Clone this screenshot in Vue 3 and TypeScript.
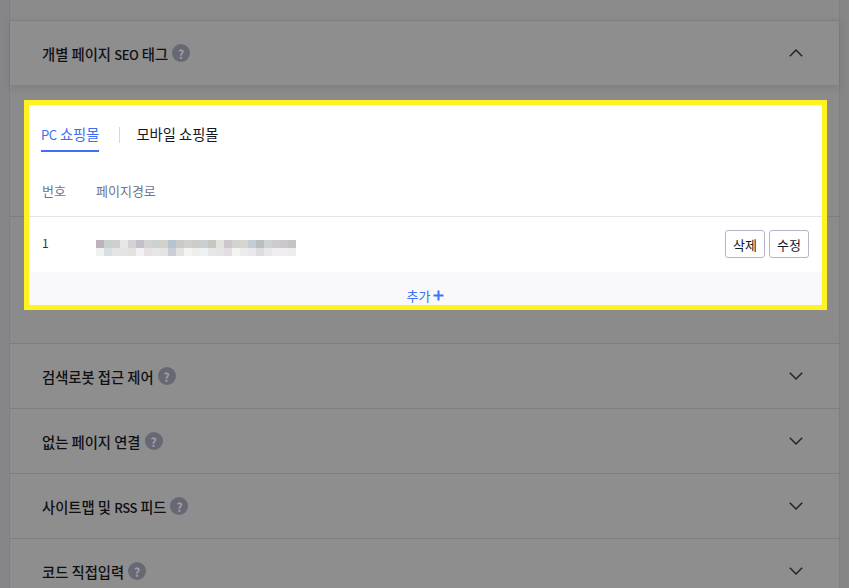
<script setup lang="ts">
const sections = [
  { before: '검색로봇 접근 제어', latin: '', after: '' },
  { before: '없는 페이지 연결', latin: '', after: '' },
  { before: '사이트맵 및 ', latin: 'RSS', after: ' 피드' },
  { before: '코드 직접입력', latin: '', after: '' }
]

// blurred url in the table row
const blurTop = ['#c0b2ba', '#c7d0ce', '#cfcfcf', '#e6e6e8', '#d2d2d2', '#c6bfca', '#d2d2d0', '#ccd2d2', '#d2d2cc', '#b4c5d0', '#cbcbc6', '#d0d0cc', '#cfcbcc', '#cad0d0', '#c9c6c0', '#e2e2e0', '#cdc6d0', '#d2d2ce', '#d6d6cf', '#c4ccd6', '#b9bfbf', '#cdd2d2', '#d0cace', '#c9c6cc', '#c4c4c6']
const blurBottom = ['#f0f0ee', '#d6e0e0', '#e5e5e5', '#e4e4e4', '#e2e2e0', '#f2f2f2', '#e6e2e4', '#e6e6e4', '#e4e4e2', '#c8ced4', '#e2e4e2', '#f4f4f2', '#eeeeec', '#eff2f4', '#e6e6e6', '#e4e6e6', '#e2dfe2', '#f4f4f0', '#ececea', '#e8e8ee', '#dcdce0', '#e8e8e8', '#f0eef0', '#f0efee', '#eeeded']
const blurCells = [...blurTop, ...blurBottom]
</script>

<template>
  <div class="page">
    <div class="frame">
      <div class="top-gap"></div>
      <section class="section open">
        <div class="section-title">
          <span>개별 페이지 <span class="latin">SEO</span> 태그</span>
          <i class="help">?</i>
        </div>
        <svg class="chevron" width="16" height="10" viewBox="0 0 16 10">
          <path d="M1.8 8.2 8 2l6.2 6.2" />
        </svg>
      </section>
      <div class="panel-back">
        <div class="back-line"></div>
      </div>
      <section v-for="item in sections" :key="item.before" class="section">
        <div class="section-title">
          <span>{{ item.before }}<span v-if="item.latin" class="latin">{{ item.latin }}</span>{{ item.after }}</span>
          <i class="help">?</i>
        </div>
        <svg class="chevron" width="16" height="10" viewBox="0 0 16 10">
          <path d="M1.8 1.8 8 8l6.2-6.2" />
        </svg>
      </section>
    </div>

    <div class="highlight">
      <div class="tabs">
        <span class="tab active"><span class="latin">PC</span> 쇼핑몰</span>
        <i class="tab-sep"></i>
        <span class="tab">모바일 쇼핑몰</span>
      </div>
      <div class="table-head">
        <span class="col-no">번호</span>
        <span>페이지경로</span>
      </div>
      <div class="table-row">
        <span class="col-no num">1</span>
        <div class="blur">
          <i v-for="(color, idx) in blurCells" :key="idx" :style="{ background: color }"></i>
        </div>
        <div class="actions">
          <button>삭제</button>
          <button>수정</button>
        </div>
      </div>
      <div class="add-row">
        <span>추가</span>
        <svg width="11" height="11" viewBox="0 0 11 11">
          <path d="M5.5 0.5v10M0.5 5.5h10" />
        </svg>
      </div>
    </div>
  </div>
</template>

<style scoped>
.page {
  position: relative;
  width: 849px;
  height: 588px;
  overflow: hidden;
  background: #868688;
  font-family: 'Noto Sans CJK KR', 'Noto Sans', sans-serif;
}
.frame {
  width: 831px;
  height: 588px;
  margin-left: 9px;
  box-sizing: border-box;
  border-left: 1px solid #7f7f80;
  border-right: 1px solid #7f7f80;
  background: #8b8b8c;
}
.top-gap {
  height: 20px;
}
.section {
  display: flex;
  align-items: center;
  justify-content: space-between;
  height: 65px;
  box-sizing: border-box;
  padding: 0 35px 0 32px;
  border-top: 1px solid #7e7e7f;
  background: #8e8e8f;
}
.section.open {
  position: relative;
  box-shadow: 0 3px 8px rgba(0, 0, 0, 0.1);
}
.section-title {
  display: flex;
  align-items: center;
  gap: 4px;
  font-size: 14.3px;
  font-weight: 500;
  color: #101012;
}
.latin {
  font-size: 13px;
  letter-spacing: -0.4px;
}
.help {
  display: flex;
  align-items: center;
  justify-content: center;
  width: 18px;
  height: 18px;
  border-radius: 50%;
  background: #686874;
  color: #a0a0aa;
  font-size: 12px;
  font-style: normal;
  font-weight: 700;
}
.chevron path {
  fill: none;
  stroke: #20222c;
  stroke-width: 1.5;
}
.panel-back {
  height: 258px;
  padding-top: 131px;
  box-sizing: border-box;
}
.back-line {
  height: 1px;
  background: #7e7e7f;
}
.highlight {
  position: absolute;
  left: 24px;
  top: 100px;
  width: 803px;
  height: 210px;
  box-sizing: border-box;
  display: flex;
  flex-direction: column;
  border: 5px solid #fff21f;
  background: #fff;
  overflow: hidden;
}
.tabs {
  display: flex;
  align-items: center;
  height: 47px;
  padding-left: 12px;
  flex-shrink: 0;
}
.tab {
  height: 47px;
  box-sizing: border-box;
  padding-top: 19px;
  font-size: 14.3px;
  line-height: 20px;
  color: #16161c;
}
.tab.active {
  color: #3c70f5;
  border-bottom: 2px solid #3c70f5;
}
.tab-sep {
  width: 1px;
  height: 16px;
  margin: 12px 16px 0 20px;
  background: #d8d8dc;
}
.table-head {
  display: flex;
  align-items: center;
  height: 65px;
  padding: 12px 0 0 13px;
  box-sizing: border-box;
  font-size: 13px;
  color: #70748a;
  border-bottom: 1px solid #e3e4ea;
  flex-shrink: 0;
}
.col-no {
  width: 54px;
}
.table-row {
  display: flex;
  align-items: center;
  height: 55px;
  padding: 0 13px 1px 13px;
  box-sizing: border-box;
  flex-shrink: 0;
}
.num {
  font-size: 12px;
  color: #333;
  margin-top: -4px;
}
.blur {
  display: grid;
  grid-template-columns: repeat(25, 8px);
  grid-auto-rows: 8px;
  margin-top: 8px;
}
.actions {
  display: flex;
  gap: 4px;
  margin-left: auto;
}
.actions button {
  width: 40px;
  height: 28px;
  padding: 0;
  border: 1px solid #b4b6c8;
  border-radius: 3px;
  background: #fff;
  color: #16161c;
  font-family: inherit;
  font-size: 13px;
}
.add-row {
  flex: 1;
  display: flex;
  align-items: center;
  justify-content: center;
  gap: 3px;
  padding-top: 14px;
  background: #f9f9fc;
  color: #3c70f5;
  font-size: 13px;
  min-height: 33px;
  box-sizing: border-box;
}
.add-row svg path {
  fill: none;
  stroke: #3c70f5;
  stroke-width: 2;
}
</style>
